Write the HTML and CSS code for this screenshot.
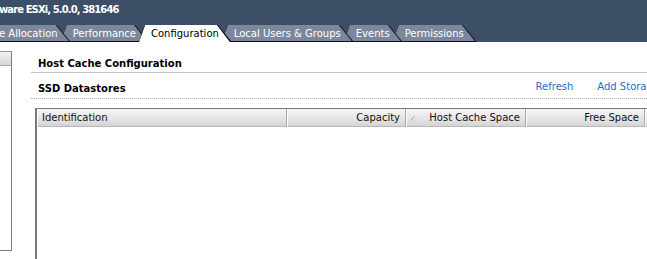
FILE: index.html
```html
<!DOCTYPE html>
<html lang="en">
<head>
    <meta charset="UTF-8">
    <meta name="viewport" content="width=device-width, initial-scale=1.0">
    <title>Host Cache Configuration</title>
    <link rel="stylesheet" href="styles.css">
</head>
<body>
    <div class="page">
        <div class="topbar">
            <div class="title">ware ESXi, 5.0.0, 381646</div>
            <div class="tabs">
                <div class="tab first">e Allocation</div>
                <div class="tab">Performance</div>
                <div class="tab active">Configuration</div>
                <div class="tab">Local Users &amp; Groups</div>
                <div class="tab">Events</div>
                <div class="tab">Permissions</div>
            </div>
        </div>

        <div class="main">
            <div class="sidebar">
                <div class="sidebar-head"></div>
            </div>

            <div class="content">
                <div class="section-title">Host Cache Configuration</div>

                <div class="subhead">
                    <div class="subhead-title">SSD Datastores</div>
                    <div class="links">
                        <a href="#">Refresh</a>
                        <a href="#">Add Storage</a>
                    </div>
                </div>

                <div class="grid">
                    <div class="grid-head">
                        <div class="col">Identification</div>
                        <div class="col num">Capacity</div>
                        <div class="col num sorted">
                            <svg class="sort-icon" width="6" height="6" viewBox="0 0 6 6">
                                <path d="M0.5 5.5 L4.5 1.5" stroke="#a0a0a0" stroke-width="1" fill="none"/>
                            </svg>
                            <span>Host Cache Space</span>
                        </div>
                        <div class="col num">Free Space</div>
                        <div class="col"></div>
                    </div>
                    <div class="grid-body"></div>
                </div>
            </div>
        </div>
    </div>
</body>
</html>
```

FILE: styles.css
```css
html, body {
    margin: 0;
    overflow: hidden;
}
body {
    font-family: "DejaVu Sans", Verdana, sans-serif;
    font-size: 10px;
    color: #000;
    background: #fff;
}
.page {
    width: 700px;
    height: 259px;
}
.topbar {
    background: #3c4f67;
    height: 42px;
    display: flex;
    flex-direction: column;
    justify-content: space-between;
}
.title {
    color: #fff;
    font-weight: bold;
    padding-top: 3px;
    margin-left: -1px;
    line-height: 14px;
    letter-spacing: -0.9px;
}
.tabs {
    display: flex;
    height: 17px;
}
.tab {
    position: relative;
    height: 17px;
    line-height: 17px;
    padding: 0 13px 0 12px;
    margin-left: -10px;
    color: #fff;
    background: #0c1119;
    clip-path: polygon(6px 0, calc(100% - 14px) 0, 100% 100%, 0 100%);
    white-space: nowrap;
}
.tab::before {
    content: "";
    position: absolute;
    left: 0;
    top: 0;
    right: 0;
    bottom: 1px;
    z-index: -1;
    background: #7c879b;
    clip-path: polygon(6px 0, calc(100% - 15px) 0, calc(100% - 2px) 100%, 0 100%);
}
.tab.first { margin-left: -13px; z-index: 6; }
.tab:nth-child(2) { z-index: 5; }
.tab:nth-child(4) { z-index: 4; }
.tab:nth-child(5) { z-index: 3; }
.tab:nth-child(6) { z-index: 2; }
.tab.active {
    z-index: 10;
    color: #000;
}
.tab.active::before {
    background: #fff;
    bottom: 0;
}

.main {
    display: flex;
}
.sidebar {
    width: 12px;
    height: 200px;
    margin-top: 9px;
    border-right: 1px solid #7c7c7c;
    border-bottom: 1px solid #7c7c7c;
    border-top: 1px solid #9c9c9c;
    box-sizing: border-box;
}
.sidebar-head {
    height: 13px;
    background: linear-gradient(#f2f2f2, #d6d6d6);
    border-bottom: 1px solid #a8a8a8;
}
.content {
    margin-left: 19px;
    width: 634px;
}
.section-title {
    font-weight: bold;
    padding: 14px 0 0 7px;
    line-height: 16px;
    height: 16px;
    border-bottom: 1px solid #c4c4c4;
}
.subhead {
    display: flex;
    height: 25px;
    border-bottom: 1px dotted #aeaeae;
}
.subhead-title {
    font-weight: bold;
    padding: 9px 0 0 7px;
    line-height: 14px;
}
.links {
    margin-left: auto;
    display: flex;
    gap: 24px;
    padding: 7px 6px 0 0;
    line-height: 14px;
}
.links a {
    color: #2b6cc0;
    text-decoration: none;
}

.grid {
    margin: 9px 0 0 4px;
    height: 160px;
    border-top: 1px solid #7a7a7a;
    border-left: 2px solid #7a7a7a;
}
.grid-head {
    display: grid;
    grid-template-columns: 250px 119px 120px 119px 30px;
    height: 18px;
    background: linear-gradient(#f6f6f6, #e4e4e4 60%, #d4d4d4);
    border-bottom: 1px solid #b8b8b8;
    box-sizing: border-box;
}
.col {
    line-height: 18px;
    padding: 0 5px;
    border-right: 1px solid #a9a9a9;
    box-shadow: inset 1px 0 #fdfdfd;
    white-space: nowrap;
    color: #111;
}
.col.num {
    text-align: right;
}
.col.sorted {
    display: flex;
    align-items: center;
    justify-content: space-between;
}
.sort-icon {
    margin-left: -1px;
}
.grid-body {
    background: #fff;
}
```
